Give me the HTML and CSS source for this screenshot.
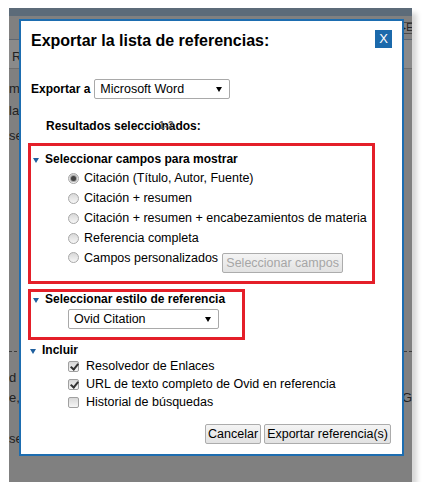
FILE: index.html
```html
<!DOCTYPE html>
<html lang="es">
<head>
    <meta charset="UTF-8">
    <title>Exportar la lista de referencias</title>
    <link rel="stylesheet" href="styles.css">
</head>
<body>
    <div class="shot">
        <div class="page">
            <div class="page-top"></div>
            <div class="page-head"><span class="edge-btn">&#9656;E</span></div>
            <div class="page-tabs"><span class="tab">R</span></div>
            <div class="page-body">
                <p class="frag f1">mi</p>
                <p class="frag f2">la</p>
                <p class="frag f3">se</p>
                <div class="dash"></div>
                <p class="frag f4">d</p>
                <p class="frag f5">e,<span class="go">Go</span></p>
                <p class="frag f6">se</p>
            </div>

            <!-- modal -->
            <div class="dialog">
                <h2 class="title">Exportar la lista de referencias:</h2>
                <span class="close">X</span>

                <div class="export-row">
                    <span class="label">Exportar a</span>
                    <span class="select sel-word">Microsoft Word<i class="arrow"></i></span>
                </div>

                <div class="results">Resultados seleccionados:<span class="count">1-2</span></div>

                <div class="box box-fields">
                    <div class="section"><i class="tri"></i>Seleccionar campos para mostrar</div>
                    <div class="opt"><span class="radio checked"></span>Citación (Título, Autor, Fuente)</div>
                    <div class="opt"><span class="radio"></span>Citación + resumen</div>
                    <div class="opt"><span class="radio"></span>Citación + resumen + encabezamientos de materia</div>
                    <div class="opt"><span class="radio"></span>Referencia completa</div>
                    <div class="opt opt-last"><span class="radio"></span>Campos personalizados<span class="btn btn-off">Seleccionar campos</span></div>
                </div>

                <div class="box box-style">
                    <div class="section"><i class="tri"></i>Seleccionar estilo de referencia</div>
                    <span class="select sel-style">Ovid Citation<i class="arrow"></i></span>
                </div>

                <div class="section section-plain"><i class="tri"></i>Incluir</div>
                <div class="chk-row"><span class="check on"></span>Resolvedor de Enlaces</div>
                <div class="chk-row"><span class="check on"></span>URL de texto completo de Ovid en referencia</div>
                <div class="chk-row"><span class="check"></span>Historial de búsquedas</div>

                <div class="actions">
                    <span class="btn">Cancelar</span>
                    <span class="btn">Exportar referencia(s)</span>
                </div>
            </div>
        </div>
    </div>
</body>
</html>
```

FILE: styles.css
```css
body {
    margin: 0;
    background: #fff;
    font-family: "Liberation Sans", Arial, sans-serif;
}
.shot {
    padding: 8px 0 0 9px;
}
.page {
    position: relative;
    width: 403px;
    height: 474px;
    background: #808080;
    overflow: hidden;
    box-shadow: 5px 5px 5px rgba(0,0,0,0.16);
}
.page-top {
    height: 8px;
    background: #5c6b79;
}
.page-head {
    height: 23px;
    border-bottom: 1px solid #5e6670;
    position: relative;
}
.edge-btn {
    position: absolute;
    right: -4px;
    top: 6px;
    border: 1px solid #4a4a4a;
    font-size: 10px;
    line-height: 10px;
    padding: 0 2px;
    color: #222;
}
.page-tabs {
    height: 28px;
    background: #8a8a8a;
    border-bottom: 1px solid #6e6e6e;
}
.tab {
    display: inline-block;
    margin: 9px 0 0 3px;
    font-size: 13px;
    color: #222;
}
.page-body {
    position: relative;
}
.frag {
    margin: 0;
    font-size: 13px;
    line-height: 15px;
    color: #222;
}
.f1 { margin-top: 12px; }
.f2 { margin-top: 7px; }
.f3 { margin-top: 10px; }
.dash {
    margin-top: 208px;
    border-top: 1px dashed #3c3c3c;
}
.f4 { margin-top: 18px; }
.f5 { margin-top: 5px; position: relative; }
.f6 { margin-top: 26px; }
.go {
    position: absolute;
    left: 393px;
    top: 0;
}

/* dialog */
.dialog {
    position: absolute;
    left: 10px;
    top: 11px;
    width: 385px;
    height: 437px;
    box-sizing: border-box;
    border: 2px solid #1d6db0;
    background: #fff;
    padding: 10px 11px 0 7px;
    color: #000;
    font-size: 12.5px;
}
.title {
    margin: 0 0 0 3px;
    font-size: 16px;
    line-height: 20px;
    font-weight: bold;
}
.close {
    position: absolute;
    right: 10px;
    top: 9px;
    width: 17px;
    height: 18px;
    background: #1b69ab;
    color: #fff;
    font-size: 13px;
    line-height: 18px;
    text-align: center;
}
.export-row {
    display: flex;
    align-items: center;
    margin: 28px 0 0 3px;
}
.label {
    font-weight: bold;
    font-size: 12px;
    margin-right: 4px;
}
.select {
    position: relative;
    display: inline-block;
    box-sizing: border-box;
    height: 20px;
    line-height: 18px;
    border: 1px solid #a9a9a9;
    border-radius: 2px;
    padding-left: 5px;
    background: #fff;
}
.sel-word { width: 136px; }
.arrow {
    position: absolute;
    right: 7px;
    top: 7px;
    border-left: 3px solid transparent;
    border-right: 3px solid transparent;
    border-top: 5px solid #000;
}
.results {
    position: relative;
    margin: 20px 0 0 18px;
    font-weight: bold;
    font-size: 12px;
    line-height: 14px;
}
.count {
    position: absolute;
    left: 113px;
    top: 0;
    font-size: 10px;
    color: #5a5a5a;
}
.box {
    border: 3px solid #e41f29;
}
.box-fields {
    margin-top: 10px;
    width: 341px;
    padding: 6px 0 8px;
}
.section {
    font-weight: bold;
    font-size: 12px;
    line-height: 14px;
    padding-left: 14px;
    position: relative;
}
.tri {
    position: absolute;
    left: 2px;
    top: 6px;
    border-left: 3px solid transparent;
    border-right: 3px solid transparent;
    border-top: 5px solid #1f5f9e;
}
.opt {
    display: flex;
    align-items: center;
    line-height: 20px;
    padding-left: 37px;
}
.box-fields .section { margin-bottom: 2px; }
.opt-last {
    align-items: flex-start;
}
.radio {
    width: 11px;
    height: 11px;
    box-sizing: border-box;
    border: 1px solid #a8a8a8;
    border-radius: 50%;
    background: linear-gradient(#d8d8d8, #f6f6f6);
    margin-right: 5px;
    position: relative;
}
.opt-last .radio { margin-top: 4px; }
.radio.checked::after {
    content: "";
    position: absolute;
    left: 2px;
    top: 2px;
    width: 5px;
    height: 5px;
    border-radius: 50%;
    background: #444;
    box-shadow: 0 0 1px 1px #9a9a9a;
}
.btn {
    display: inline-block;
    box-sizing: border-box;
    height: 20px;
    line-height: 18px;
    padding: 0 2px;
    border: 1px solid #acacac;
    border-radius: 2px;
    background: linear-gradient(#f4f4f4, #e2e2e2);
}
.btn-off {
    margin: 5px 0 0 4px;
    color: #a6a6a6;
    width: 121px;
    text-align: center;
}
.box-style {
    margin-top: 5px;
    width: 211px;
    padding: 0 0 8px;
}
.sel-style {
    width: 151px;
    margin: 3px 0 0 37px;
}
.section-plain {
    margin-top: 3px;
}
.chk-row {
    display: flex;
    align-items: center;
    line-height: 18px;
    padding-left: 40px;
}
.chk-row:first-of-type { margin-top: 2px; }
.check {
    width: 11px;
    height: 11px;
    box-sizing: border-box;
    border: 1px solid #a0a0a0;
    border-radius: 2px;
    background: linear-gradient(#d8d8d8, #f6f6f6);
    margin-right: 7px;
    position: relative;
}
.check.on::after {
    content: "";
    position: absolute;
    left: 3px;
    top: 0;
    width: 3px;
    height: 6px;
    border-right: 2px solid #333;
    border-bottom: 2px solid #333;
    transform: rotate(40deg);
}
.actions {
    display: flex;
    justify-content: flex-end;
    gap: 3px;
    margin-top: 13px;
}
```
